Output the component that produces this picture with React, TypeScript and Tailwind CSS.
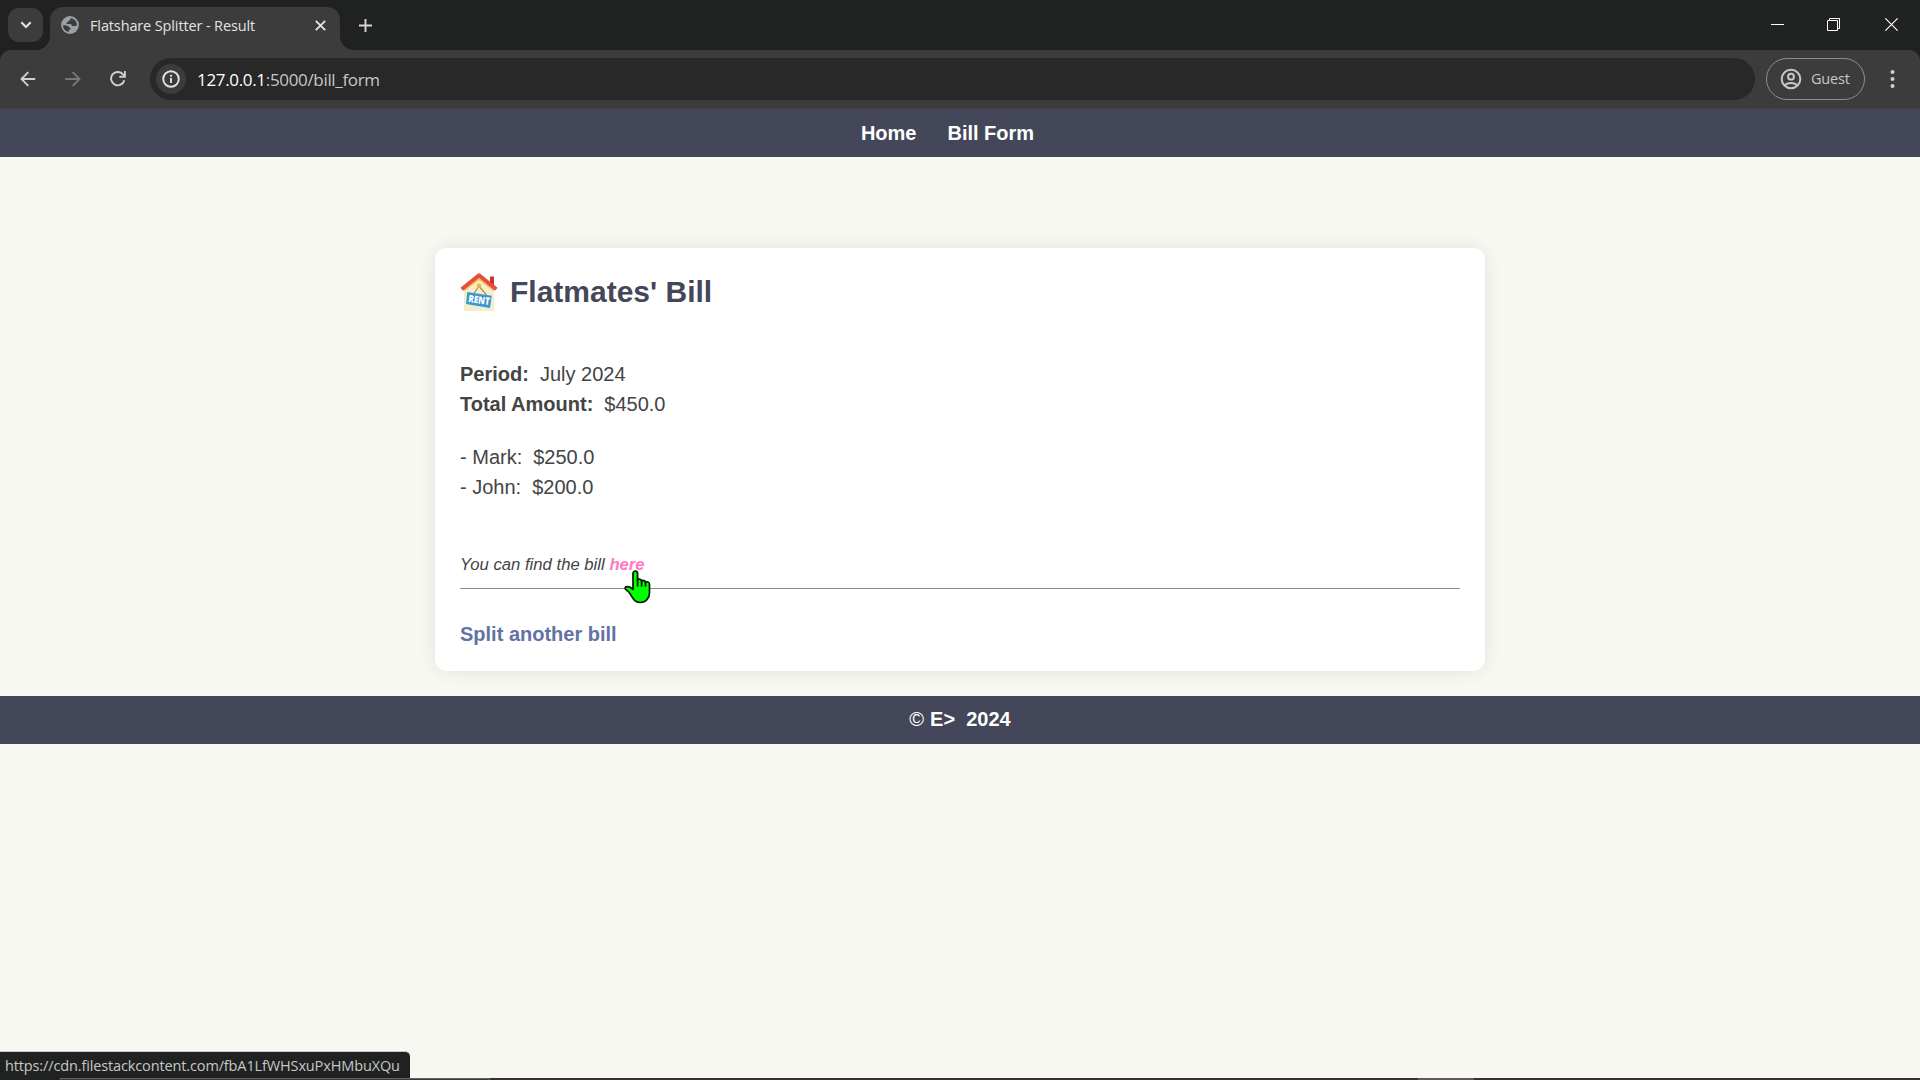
import type { ReactNode } from "react";

const UI_FONT = "font-['Open_Sans','Noto_Sans',sans-serif]";

function TabSearchButton() {
  return (
    <button className="mt-2 ml-2 flex h-[34px] w-[35px] shrink-0 items-center justify-center rounded-[11px] bg-[#3c3c3c]">
      <svg width="12" height="8" viewBox="0 0 12 8" fill="none" stroke="#e3e3e3" strokeWidth="2.1">
        <path d="M1.3 1.2 6 5.9l4.7-4.7" />
      </svg>
    </button>
  );
}

function GlobeIcon() {
  return (
    <svg width="18" height="18" viewBox="0 0 18 18">
      <circle cx="9" cy="9" r="8.9" fill="#9aa0a8" />
      <path
        d="M10.4 2.2c-1 .3-1.300.8-1.300 1.500 0 .8-.7 1-1.500 1.200-.6.200-.5 1-1.200 1.300-.6.300-1.200.500-1.200 1.100 0 .6.700.7 1.500.7h2.600c.9 0 1.300.6 1.300 1.300 0 .5.400.700 1 .7h2c.9 0 1.100-.5 2.300-.6A7 7 0 0 0 10.400 2.200Z"
        fill="#3c3c3c"
      />
      <path
        d="M2 9.300c1.700-.1 4 .1 5.300.9 1 .6.700 1.300 1.500 1.600.9.300 1.100.8.600 1.400-.5.600-1.500.500-1.700 1.300-.1.600.1 1.200.3 1.500A7 7 0 0 1 2 9.300Z"
        fill="#3c3c3c"
      />
    </svg>
  );
}

function ActiveTab() {
  return (
    <div className="relative mt-[7px] ml-[7px] flex h-[43px] w-[290px] shrink-0 items-start rounded-t-[13px] bg-[#3c3c3c] pt-[9px] pl-[11px]">
      <svg className="absolute bottom-0 -left-[14px]" width="14" height="14" viewBox="0 0 14 14">
        <path d="M14 0v14H0A14 14 0 0 0 14 0Z" fill="#3c3c3c" />
      </svg>
      <svg className="absolute -right-[14px] bottom-0" width="14" height="14" viewBox="0 0 14 14">
        <path d="M0 0v14h14A14 14 0 0 1 0 0Z" fill="#3c3c3c" />
      </svg>
      <GlobeIcon />
      <span className="ml-[11px] w-[225px] text-[14.5px] leading-[19px] tracking-[-0.13px] whitespace-nowrap text-[#e3e3e3]">
        Flatshare Splitter - Result
      </span>
      <svg className="mt-1" width="11" height="11" viewBox="0 0 11 11" stroke="#e3e3e3" strokeWidth="1.9">
        <path d="m.8.8 9.400 9.400M10.200.8.800 10.200" />
      </svg>
    </div>
  );
}

function WindowControls() {
  return (
    <div className="ml-auto flex items-start">
      <svg className="mt-[18px]" width="14" height="14" viewBox="0 0 14 14">
        <path d="M0 6h13v1H0z" fill="#fff" />
      </svg>
      <svg className="mt-[18px] ml-[42px]" width="13" height="13" viewBox="0 0 13 13" fill="none" stroke="#fff">
        <path d="M.5 2.500h10v10H.5z" />
        <path d="M2.500 2.500v-2h10v10h-2" />
      </svg>
      <svg className="mt-[18px] mr-[22px] ml-[45px]" width="13" height="13" viewBox="0 0 13 13" stroke="#fff" strokeWidth="1.1">
        <path d="m.3.3 12.400 12.400M12.700.3.300 12.700" />
      </svg>
    </div>
  );
}

function TabStrip() {
  return (
    <div className="flex h-[50px] items-start">
      <TabSearchButton />
      <ActiveTab />
      <svg className="mt-[19px] ml-[19px]" width="13" height="13" viewBox="0 0 13 13" stroke="#d5d5d5" strokeWidth="1.9">
        <path d="M6.500 0v13M0 6.500h13" />
      </svg>
      <WindowControls />
    </div>
  );
}

function Toolbar() {
  return (
    <div className="rounded-t-[11px] border-b border-[#40433e] bg-[#3c3c3c]">
      <div className="flex h-[58px] items-center">
        <svg className="ml-5" width="16" height="16" viewBox="0 0 16 16" fill="none" stroke="#d0d0d0" strokeWidth="1.9">
          <path d="M15.200 8H1.800M8.300 1.200 1.500 8l6.800 6.800" />
        </svg>
        <svg className="ml-[29px]" width="16" height="16" viewBox="0 0 16 16" fill="none" stroke="#787878" strokeWidth="1.9">
          <path d="M.2 8h13.900M7.700 1.200 14.500 8l-6.800 6.800" />
        </svg>
        <svg className="ml-[29px]" width="16" height="16" viewBox="0 0 16 16" fill="none" stroke="#d0d0d0" strokeWidth="1.9">
          <path d="M14.300 9.300A6.700 6.700 0 1 1 13 3.400L14.800 5.400" />
          <path d="M14.900 0v5.800H9.300" />
        </svg>
        <div className="ml-6 flex h-[42px] flex-1 items-center rounded-full bg-[#282828] pl-1.5">
          <span className="flex h-[30px] w-[30px] items-center justify-center rounded-full bg-[#3c3c3c]">
            <svg width="18" height="18" viewBox="0 0 18 18" fill="none" stroke="#e3e3e3" strokeWidth="1.9">
              <circle cx="9" cy="9" r="7.8" />
              <path d="M9 8v5M9 4.800v1.900" />
            </svg>
          </span>
          <span className="ml-[11px] pt-px text-[17px] leading-6 tracking-[-0.33px] whitespace-nowrap text-[#c7c7c7]">
            <span className="text-white">127.0.0.1</span>:5000/bill_form
          </span>
        </div>
        <div className="ml-[11px] flex h-[42px] w-[99px] items-center rounded-full border border-[#8e8e8e] pl-[13px]">
          <svg width="22" height="22" viewBox="0 0 22 22" fill="none" stroke="#c7c7c7" strokeWidth="2">
            <circle cx="11" cy="11" r="9.3" />
            <circle cx="11" cy="8.7" r="2.9" />
            <path d="M4.500 17.200c3.800-3 9.200-3 13 0" />
          </svg>
          <span className="ml-[9px] text-[14.5px] leading-5 tracking-[-0.2px] text-[#c7c7c7]">Guest</span>
        </div>
        <svg className="mr-[25px] ml-[25px]" width="5" height="20" viewBox="0 0 5 20" fill="#d0d0d0">
          <circle cx="2.5" cy="3" r="2" />
          <circle cx="2.5" cy="10" r="2" />
          <circle cx="2.5" cy="17" r="2" />
        </svg>
      </div>
    </div>
  );
}

function RentHouse() {
  return (
    <svg width="38" height="38" viewBox="0 0 38 38">
      <path d="M30 3.500h4V15h-4z" fill="#c0392b" />
      <path d="M4 15 19 3.500 34 15v23H4z" fill="#f5eeca" />
      <path d="M4 17 19 5.500 34 17" fill="none" stroke="#f0c65a" strokeWidth="2.6" />
      <path d="M1.700 16.300 19 2.300l17.300 14" fill="none" stroke="#e74c3c" strokeWidth="4" strokeLinejoin="round" />
      <path d="M13.500 21 19 13l7.500 9" fill="none" stroke="#b5893d" strokeWidth="1.2" />
      <circle cx="19" cy="12.7" r="2.2" fill="#e6b84c" />
      <path d="m7.300 19 24.500 3.700-1.800 12.300L6 31z" fill="#3a96d4" />
      <text
        x="8"
        y="29"
        transform="rotate(8 8 29)"
        textLength="21.5"
        lengthAdjust="spacingAndGlyphs"
        fill="#fff"
        className="font-['Open_Sans',sans-serif] text-[10px] font-extrabold"
      >
        RENT
      </text>
    </svg>
  );
}

function HandCursor() {
  return (
    <svg className="absolute top-[15px] left-[15px] z-10" width="27" height="34" viewBox="0 0 27 34">
      <path
        d="M9 3.500a2.300 2.300 0 0 1 4.600 0V10c1.500-1.500 3.600-.8 4 .9 1.500-1 3.400-.2 3.800 1.200 2-.9 4.100.2 4.100 2.300v8.300c0 5-3.300 9.800-9.300 9.800-3.500 0-5.400-1.500-7.300-4.200l-4-6.200-3.200-2.800c-1.300-1.200-.1-3.100 1.900-2.700 2 .1 3.900 1.200 5.400 2.700z"
        fill="#00ff00"
        stroke="#001800"
        strokeWidth="1.7"
        strokeLinejoin="round"
      />
      <path d="M13.600 9v7M17.600 10.500V16M21.500 12v4" stroke="#001800" strokeWidth="1.7" strokeLinecap="round" />
    </svg>
  );
}

function Bar({ children }: { children: ReactNode }) {
  return <div className="flex justify-center bg-[#44475a] text-xl font-bold text-white">{children}</div>;
}

function BillCard() {
  return (
    <main className="mx-auto mt-[91px] h-[423px] w-[1050px] rounded-[12px] bg-white px-[25px] pt-[25px] shadow-[0_0_18px_rgba(0,0,0,0.09)]">
      <h1 className="flex h-[38px] text-[30px] leading-[38px] font-bold text-[#44475a]">
        <RentHouse />
        <span className="ml-3 whitespace-nowrap">Flatmates' Bill</span>
      </h1>
      <div className="mt-12 text-xl leading-[30px]">
        <p className="flex gap-[11px]">
          <strong>Period:</strong>
          <span>July 2024</span>
        </p>
        <p className="flex gap-[11px]">
          <strong>Total Amount:</strong>
          <span>$450.0</span>
        </p>
      </div>
      <div className="mt-[23px] text-xl leading-[30px]">
        <p className="flex gap-[11px]">
          <span>- Mark:</span>
          <span>$250.0</span>
        </p>
        <p className="flex gap-[11px]">
          <span>- John:</span>
          <span>$200.0</span>
        </p>
      </div>
      <p className="mt-[51px] text-[16.7px] leading-6 italic">
        You can find the bill{" "}
        <a className="relative font-bold text-[#ff79c6]">
          here
          <HandCursor />
        </a>
      </p>
      <hr className="mt-[11px] border-t border-[#8c8c8c]" />
      <a className="mt-[30px] block text-xl leading-[30px] font-bold text-[#6272a4]">Split another bill</a>
    </main>
  );
}

export default function App() {
  return (
    <div className="flex h-[1080px] w-[1920px] flex-col overflow-hidden bg-[#f8f8f2] font-['Liberation_Sans',Arial,sans-serif] text-[#444]">
      <header className={`bg-[#202221] ${UI_FONT}`}>
        <TabStrip />
        <Toolbar />
      </header>
      <Bar>
        <nav className="flex h-12 items-center gap-[31px] pr-[25px]">
          <a>Home</a>
          <a>Bill Form</a>
        </nav>
      </Bar>
      <BillCard />
      <footer className="mt-[25px]">
        <Bar>
          <p className="flex h-12 items-center pb-0.5">
            <span className="font-normal">©</span>
            <span className="ml-[6px]">E&gt;</span>
            <span className="ml-[11px]">2024</span>
          </p>
        </Bar>
      </footer>
      <div
        className={`mt-auto flex h-[27px] w-[410px] items-center rounded-tr-[5px] border-t border-[#c9c9c4] bg-[#202221] pt-0.5 pl-[5px] ${UI_FONT}`}
      >
        <span className="text-[14.5px] leading-5 tracking-[-0.13px] whitespace-nowrap text-[#c7c7c7]">
          https://cdn.filestackcontent.com/fbA1LfWHSxuPxHMbuXQu
        </span>
      </div>
      <div className="flex h-0.5 bg-[#353230]">
        <span className="w-[60px] bg-[#202221]" />
        <span className="w-[430px] border border-b-0 border-[#636363] bg-[#3a3a3a]" />
        <span className="ml-[928px] w-14 bg-[#5f5b58]" />
      </div>
    </div>
  );
}
